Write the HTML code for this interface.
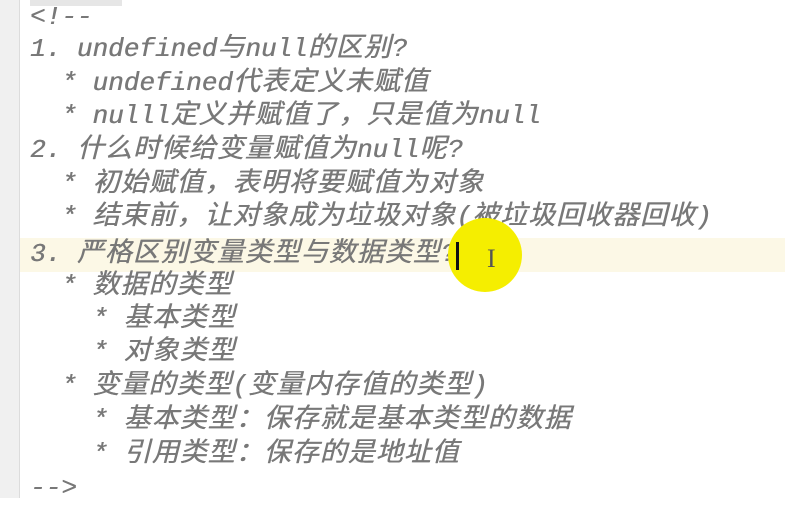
<!DOCTYPE html><html><head><style>
body{margin:0;width:785px;height:498px;overflow:hidden;background:#fff;position:relative;font-family:"Liberation Mono","Noto Sans CJK SC",monospace;}
.g{position:absolute;left:0;top:0;width:19px;height:498px;background:#f0f0f0;border-right:1px solid #dcdcdc}
.l{position:absolute;left:30px;font-size:26px;font-style:italic;color:#787878;white-space:pre;line-height:34px;height:34px;text-shadow:0.5px 0 0 #787878}
.l i{font-size:27px;letter-spacing:1px;font-style:italic}
.hl{position:absolute;left:20px;top:238px;width:765px;height:34px;background:#fcf8e6}
.c{position:absolute;left:456px;top:242px;width:3px;height:28px;background:#111}
.y{position:absolute;left:448px;top:218px;width:74px;height:74px;border-radius:50%;background:#f5ee00}
.ib{position:absolute;left:487px;top:244px;font-family:"Liberation Serif",serif;font-size:26px;color:#555}
.top{position:absolute;left:30px;top:0;width:92px;height:6px;background:#e6e6e6}
</style></head><body>
<div class="g"></div><div class="top"></div><div class="hl"></div>
<div class="l" style="top:0">&lt;!--</div>
<div class="l" style="top:32px">1. undefined<i>与</i>null<i>的区别</i>?</div>
<div class="l" style="top:66px">  * undefined<i>代表定义未赋值</i></div>
<div class="l" style="top:99px">  * nulll<i>定义并赋值了，只是值为</i>null</div>
<div class="l" style="top:133px">2. <i>什么时候给变量赋值为</i>null<i>呢</i>?</div>
<div class="l" style="top:167px">  * <i>初始赋值，表明将要赋值为对象</i></div>
<div class="l" style="top:200px">  * <i>结束前，让对象成为垃圾对象</i>(<i>被垃圾回收器回收</i>)</div>
<div class="l" style="top:237px">3. <i>严格区别变量类型与数据类型</i>?</div>
<div class="l" style="top:269px">  * <i>数据的类型</i></div>
<div class="l" style="top:302px">    * <i>基本类型</i></div>
<div class="l" style="top:335px">    * <i>对象类型</i></div>
<div class="l" style="top:369px">  * <i>变量的类型</i>(<i>变量内存值的类型</i>)</div>
<div class="l" style="top:403px">    * <i>基本类型：保存就是基本类型的数据</i></div>
<div class="l" style="top:437px">    * <i>引用类型：保存的是地址值</i></div>
<div class="l" style="top:471px">--&gt;</div>
<div class="y"></div><div class="c"></div><div class="ib">I</div>
</body></html>
